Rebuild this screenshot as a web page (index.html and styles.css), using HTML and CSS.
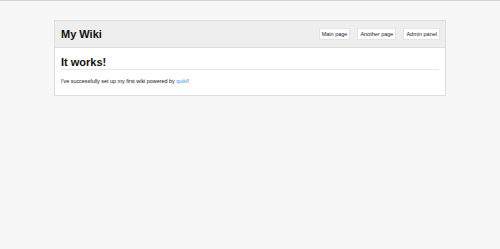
FILE: index.html
```html
<!DOCTYPE html>
<html>
<head>
	<title>My Wiki</title>
	<link rel="stylesheet" href="styles.css">
</head>
<body>
	<div class="wiki">
		<div class="header">
			<h1 class="site-name">My Wiki</h1>
			<div class="nav">
				<a href="#" class="nav-btn">Main page</a>
				<a href="#" class="nav-btn">Another page</a>
				<a href="#" class="nav-btn">Admin panel</a>
			</div>
		</div>
		<div class="content">
			<h2 class="page-title">It works!</h2>
			<p class="text">I've successfully set up my first wiki powered by <a href="#" class="link">quiki</a>!</p>
		</div>
	</div>
</body>
</html>
```

FILE: styles.css
```css
html {
	height: 100%;
}
body {
	margin: 0;
	min-height: 100%;
	background-color: #f7f7f7;
	border-top: 1px solid #d4d4d4;
	box-sizing: border-box;
	font-family: 'Liberation Sans', Arial, sans-serif;
	color: #111;
	padding-top: 19px;
}
.wiki {
	width: 392px;
	margin: 0 auto;
	background-color: #fff;
	border: 1px solid #dedede;
	box-sizing: border-box;
}
.header {
	display: flex;
	justify-content: space-between;
	align-items: center;
	height: 26px;
	padding: 0 5px 0 6px;
	background-color: #eee;
	border-bottom: 1px solid #dedede;
}
.site-name {
	margin: 0;
	font-size: 11px;
	font-weight: bold;
}
.nav {
	display: flex;
	gap: 7px;
	align-items: center;
}
.nav-btn {
	display: inline-block;
	background-color: #fff;
	border: 1px solid #e4e4e4;
	padding: 2px 2px;
	font-size: 5.5px;
	line-height: 6px;
	color: #223;
	text-decoration: none;
}
.content {
	padding: 8px 6px 10px;
}
.page-title {
	margin: 0;
	font-size: 11px;
	font-weight: bold;
	line-height: 13px;
	border-bottom: 1px solid #e8e8e8;
}
.text {
	margin: 7px 0 0;
	font-size: 5.4px;
	line-height: 8px;
}
.link {
	color: #3a9bf0;
	text-decoration: none;
}
```
